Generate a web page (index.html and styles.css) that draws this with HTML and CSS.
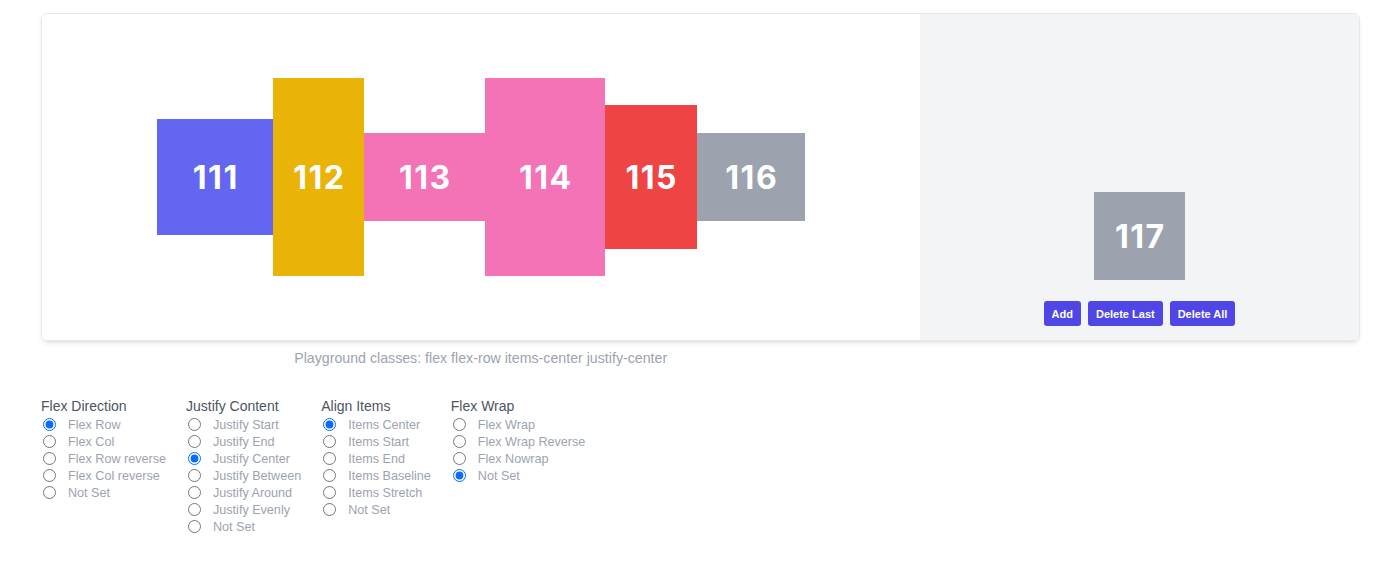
FILE: index.html
```html
<!DOCTYPE html>
<html>
<head>
<meta charset="utf-8">
<link rel="stylesheet" href="styles.css">
</head>
<body>
<div class="page">
  <div class="card">
    <div class="playground">
      <div class="box b1">111</div>
      <div class="box b2">112</div>
      <div class="box b3">113</div>
      <div class="box b4">114</div>
      <div class="box b5">115</div>
      <div class="box b6">116</div>
    </div>
    <div class="side">
      <div class="box b7">117</div>
      <div class="buttons">
        <button class="btn">Add</button>
        <button class="btn">Delete Last</button>
        <button class="btn">Delete All</button>
      </div>
    </div>
  </div>
  <div class="caption-row">
    <p class="caption">Playground classes: flex flex-row items-center justify-center</p>
  </div>
  <div class="options">
    <div class="group">
      <div class="group-title">Flex Direction</div>
      <label class="opt"><input type="radio" name="dir" checked><span>Flex Row</span></label>
      <label class="opt"><input type="radio" name="dir"><span>Flex Col</span></label>
      <label class="opt"><input type="radio" name="dir"><span>Flex Row reverse</span></label>
      <label class="opt"><input type="radio" name="dir"><span>Flex Col reverse</span></label>
      <label class="opt"><input type="radio" name="dir"><span>Not Set</span></label>
    </div>
    <div class="group">
      <div class="group-title">Justify Content</div>
      <label class="opt"><input type="radio" name="jc"><span>Justify Start</span></label>
      <label class="opt"><input type="radio" name="jc"><span>Justify End</span></label>
      <label class="opt"><input type="radio" name="jc" checked><span>Justify Center</span></label>
      <label class="opt"><input type="radio" name="jc"><span>Justify Between</span></label>
      <label class="opt"><input type="radio" name="jc"><span>Justify Around</span></label>
      <label class="opt"><input type="radio" name="jc"><span>Justify Evenly</span></label>
      <label class="opt"><input type="radio" name="jc"><span>Not Set</span></label>
    </div>
    <div class="group">
      <div class="group-title">Align Items</div>
      <label class="opt"><input type="radio" name="ai" checked><span>Items Center</span></label>
      <label class="opt"><input type="radio" name="ai"><span>Items Start</span></label>
      <label class="opt"><input type="radio" name="ai"><span>Items End</span></label>
      <label class="opt"><input type="radio" name="ai"><span>Items Baseline</span></label>
      <label class="opt"><input type="radio" name="ai"><span>Items Stretch</span></label>
      <label class="opt"><input type="radio" name="ai"><span>Not Set</span></label>
    </div>
    <div class="group">
      <div class="group-title">Flex Wrap</div>
      <label class="opt"><input type="radio" name="fw"><span>Flex Wrap</span></label>
      <label class="opt"><input type="radio" name="fw"><span>Flex Wrap Reverse</span></label>
      <label class="opt"><input type="radio" name="fw"><span>Flex Nowrap</span></label>
      <label class="opt"><input type="radio" name="fw" checked><span>Not Set</span></label>
    </div>
  </div>
</div>
</body>
</html>
```

FILE: styles.css
```css
* { box-sizing: border-box; }
html, body { margin: 0; padding: 0; background: #fff; }
body { font-family: "Liberation Sans", Arial, sans-serif; }

.page {
  padding: 13px 40px 0 41px;
}

.card {
  display: grid;
  grid-template-columns: 2fr 1fr;
  height: 328px;
  border: 1px solid #e5e7eb;
  border-radius: 6px;
  overflow: hidden;
  box-shadow: 0 3px 5px -1px rgba(0,0,0,0.10), 0 2px 3px -2px rgba(0,0,0,0.08);
}

.playground {
  display: flex;
  flex-direction: row;
  align-items: center;
  justify-content: center;
  background: #fff;
}

.box {
  display: flex;
  align-items: center;
  justify-content: center;
  padding-top: 2px;
  color: #fff;
  font-family: Inter, "Liberation Sans", sans-serif;
  font-weight: 700;
  font-size: 32px;
  line-height: 36px;
  letter-spacing: 1.5px;
  text-indent: 1.5px;
}

.b1 { width: 116px; height: 116px; background: #6366f1; }
.b2 { width: 91px; height: 198px; background: #eab308; }
.b3 { width: 121px; height: 88px; background: #f472b6; }
.b4 { width: 120px; height: 198px; background: #f472b6; }
.b5 { width: 92px; height: 144px; background: #ef4444; }
.b6 { width: 108px; height: 88px; background: #9ca3af; }
.b7 { width: 91px; height: 88px; background: #9ca3af; }

.side {
  background: #f3f4f6;
  display: flex;
  flex-direction: column;
  align-items: center;
  justify-content: flex-end;
  padding-bottom: 14px;
}

.buttons {
  display: flex;
  gap: 7px;
  margin-top: 21px;
}

.btn {
  height: 25px;
  padding: 0 8px;
  border: 0;
  border-radius: 3px;
  background: #4f46e5;
  color: #fff;
  font-family: "Liberation Sans", Arial, sans-serif;
  font-size: 11px;
  font-weight: 700;
}

.caption-row {
  width: 66.6667%;
  text-align: center;
}

.caption {
  margin: 7px 0 0;
  font-size: 14.2px;
  line-height: 20px;
  color: #9ca3af;
}

.options {
  display: flex;
  gap: 20px;
  margin-top: 28px;
}

.group {
  display: flex;
  flex-direction: column;
}

.group-title {
  font-size: 14px;
  line-height: 20px;
  color: #4b5563;
}

.opt {
  display: flex;
  align-items: center;
  height: 17px;
  font-size: 12.6px;
  color: #9ca3af;
}

.opt input {
  width: 13px;
  height: 13px;
  margin: 0 12px 0 2px;
  accent-color: #0a6cff;
}
```
